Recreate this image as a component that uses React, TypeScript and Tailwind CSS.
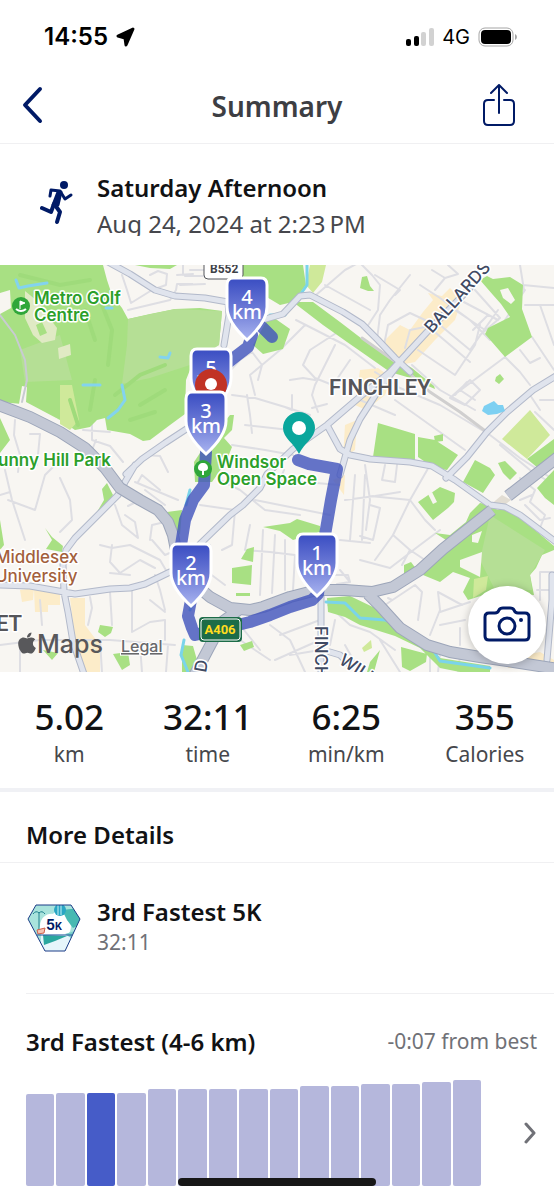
import { FaApple } from "react-icons/fa";

const stats = [
  { value: "5.02", label: "km" },
  { value: "32:11", label: "time" },
  { value: "6:25", label: "min/km" },
  { value: "355", label: "Calories" },
];

const bars = [92, 93, 93, 93, 97, 97, 97, 97, 97, 100, 100, 102, 102, 104, 106];
const currentBar = 2;

const mapGreens = [
  "M0 265H103L107 280L112 295L122 308L128 319L150 314L175 309L200 308L222 311L219 345L197 352L186 380L185 414L170 425L150 440L143 441L130 434L107 430L105 418L97 420L90 427L75 430L60 420L28 408L22 404L0 402Z",
  "M135 265H177L170 269L150 268Z",
  "M217 265H303L306 285L293 302L280 305L265 296L247 284L232 279Z",
  "M293 302L313 302L340 322L370 345L393 357L412 368L434 386L435 389L407 377L390 372L360 351L347 342L323 325Z",
  "M270 315L290 329L283 349L263 354L253 345Z",
  "M230 415H234L232 430L224 438L232 447L226 462L212 482L195 482L194 462L204 447Z",
  "M362 277L367 276L370 286L374 291L368 291L360 288Z",
  "M480 280L487 276L493 279L510 277L523 285L522 309L532 337L505 357L485 334L488 328L510 317L501 304L493 295Z",
  "M378 423L395 428L415 434L415 460L373 457Z",
  "M418 437L435 440L458 455L447 470L434 468L418 457Z",
  "M434 436L443 434V441L435 442Z",
  "M496 377L500 374L504 379L499 384L495 381Z",
  "M527 459L554 439V455L538 468Z",
  "M475 460L490 468L495 475L483 493L463 482Z",
  "M498 463L505 461L517 473L510 480L503 473Z",
  "M537 488L554 470V505L545 498Z",
  "M418 502L440 487L455 493L454 502L448 508L433 520Z",
  "M480 503L507 508L535 530L554 546V550L542 555L536 568L530 575L534 595L493 592L468 600L463 592L470 578L453 572L440 582L423 575L443 553L446 540L435 533L450 535L466 522L470 513Z",
  "M404 565L411 562L417 570L413 580L404 573Z",
  "M327 598L350 596L375 608L403 632L430 645L440 658L490 666V672H460L440 668L432 660L420 648L395 636L360 625L345 617L328 612Z",
  "M401 647L427 654L426 662L410 671L402 667Z",
  "M380 650L374 672H367L370 662Z",
  "M263 527L290 523L297 519L320 526V532L293 540L280 531Z",
  "M247 549L254 547L253 562L241 559Z",
  "M232 568L252 565L251 585L232 583Z",
  "M236 593H250V596H236Z",
  "M240 645L252 641L254 647L244 651Z",
  "M107 483L113 495L106 506L97 512L104 500L102 489Z",
  "M45 528L52 537L63 546L62 552L46 549L52 540Z",
  "M0 520L4 545L0 550Z",
  "M0 418L10 440L0 453Z",
  "M167 512L182 510L180 535L174 525Z",
  "M100 625L113 627L111 633L105 637L98 632Z",
  "M113 654L128 652L130 665L122 670Z",
  "M182 645L193 646L197 660L190 672H182Z",
  "M43 650L58 653L52 660Z",
];

const mapPaleGreens = [
  "M60 385H72L79 420L70 430L60 424Z",
  "M310 265H326L322 282L313 293L306 285Z",
  "M530 410L550 435L527 459L502 439Z",
  "M474 579L488 576L486 590L473 598Z",
  "M362 648L371 640L372 648L364 652Z",
];

const mapUrban = [
  "M385 340L400 325L410 330L423 312L433 300L428 293L442 296L450 288L462 300L455 320L435 340L415 362L400 365L385 352Z",
  "M360 370L378 368L392 378L385 395L366 410L355 405Z",
  "M345 425L357 420L355 450L343 458Z",
  "M333 480L345 475L344 495Z",
  "M20 590L34 588L33 600L22 602Z",
  "M34 590H60V605H48V612H35Z",
  "M70 598H85V625L100 645V672H85L75 640Z",
  "M508 658L540 652L554 660V668H508Z",
];

const minorRoads = [
  "M122 275L127 290L131 303L152 290L166 285L167 274L158 271L150 275",
  "M128 310L170 300L176 290L177 284H192",
  "M177 275L193 274M183 265V275",
  "M15 420L14 435L20 455L18 472M22 404L25 390L27 385",
  "M30 434L40 434L37 465M83 430L110 432M92 424L92 440L110 446L123 462M96 440L90 455M145 455L160 456L168 472",
  "M5 470L12 500L25 540M8 500L35 510L45 475L55 465M0 495L10 492",
  "M60 478L70 500L72 520L60 532",
  "M125 515L135 522L138 538L122 525L115 505M128 506L140 500M145 490L165 505M135 482L178 500M138 482L142 475L160 490",
  "M112 545L110 562L120 573L140 560L155 568M100 545L112 548L130 545L160 560L167 572M110 573L130 575",
  "M150 540L152 525L165 522M152 540L165 555L172 552",
  "M40 600L42 625M90 597L92 608L88 625M110 592L112 625M132 590V632L150 622L165 620L165 640M150 600L165 612",
  "M0 645L40 640L110 640L175 645M20 645V672M100 640L102 672M140 645L142 672M168 645L166 672M155 575L160 590L165 610",
  "M180 285L205 284M185 276H225",
  "M190 270H215M226 375L240 360L252 352L262 365L258 380M262 365L280 350L300 330L305 325",
  "M316 295L345 270L360 262M325 285L370 310",
  "M296 320L345 345L375 368M344 328L310 350L303 365L315 378L345 390M335 345L315 385L312 395L318 412M350 360L335 382",
  "M232 395L255 398L285 407L310 415M247 395L250 415L252 433M245 425L290 430M292 395V410L285 407M290 380L303 378L315 380",
  "M255 395L250 375L262 365M312 408L327 404",
  "M232 445L265 450L293 455M220 480L240 490L265 510L300 515M255 500L330 515M284 470L280 480L340 485",
  "M200 505L235 510L232 545L222 550M250 525L245 550L270 552L295 555",
  "M263 530L260 595M275 535L272 593M285 540L285 590M295 555L293 590M210 545L205 570L225 585",
  "M340 540L370 543M340 570L350 582M335 575L348 575L350 582L337 584",
  "M355 475L350 540M365 475L362 540M345 500L375 496L400 492",
  "M365 465L370 500L366 530M385 465L382 480L395 482L397 465M370 496L410 500L430 465M410 500L393 535L375 560M370 505L380 508L373 540L360 536",
  "M410 500L425 520L435 530M393 535L410 550L402 565M360 560L390 568L420 545L440 530",
  "M410 550L425 560M388 598L392 600M385 605L400 595L415 585L422 592L418 620",
  "M438 592L440 610L430 635M438 592L462 605M440 612L470 602M440 625L465 620M460 628L460 645",
  "M360 263L372 275L380 285L378 310L365 330M375 275L400 290L395 295M410 275L390 300L380 315L377 340L382 345",
  "M384 345L388 325L410 313L425 320M405 348L410 330L430 326",
  "M420 285L440 298L470 320L490 340M432 270L445 278L458 274L448 265M445 278L435 290M460 300L498 320M475 290L500 318L480 335",
  "M455 310L485 330M488 315L473 330",
  "M440 325L470 350L498 310M436 333L470 362M418 350L455 375",
  "M480 325L475 345L455 375M505 357L450 398M505 320L525 290",
  "M523 285L554 288M525 305H554M540 305L554 345M520 265L524 290M532 337L554 370M505 357L520 372L530 385M520 350L530 363L540 358",
  "M412 365L440 390L475 410M450 398L470 380L480 390L465 405L450 398M460 390L475 400M467 382L455 395",
  "M375 372L400 388L440 405L490 435L520 458L554 480M395 400L430 425L465 450",
  "M360 400L395 415M530 395L540 410M540 400H554M535 412L554 430M500 445L530 470L554 485",
  "M520 478L535 490L530 502L545 515L540 528M520 500L532 495M525 505L540 520L550 518M540 572H554M537 590H554M540 572V600",
  "M225 635L240 640L270 660M240 625L260 650M270 625L290 640L305 672M280 635L320 620M290 655L320 650M275 660L320 640",
  "M328 605L350 625L370 632L395 650M335 620L330 645M345 645L360 672M380 640L400 672",
  "M430 655V672M440 655L438 672M460 655L458 672",
];

const mediumRoads = [
  "M0 585L30 586L64 592L75 594L110 589L130 588L145 584L170 572",
  "M135 465L125 482L118 495L100 513L75 538L66 550L63 565L64 592L68 612L73 642L84 674",
  "M126 474L142 459L165 443L188 428",
  "M108 262L130 274L155 290L175 296L205 298L228 302L229 315L224 345",
  "M255 322L283 314L300 296L310 295L343 312L362 324L378 340L395 358L410 372",
  "M470 288L427 332L390 372L362 395L327 425L293 449L267 474L260 488L243 505L230 515L200 544",
  "M400 362L380 388L360 419L350 440L340 475",
  "M327 425L340 449L350 455L370 459L410 462L432 466L455 480L490 505L505 507L520 515L556 542",
  "M446 478L467 457L487 432L507 412L533 390L556 376",
  "M321 592V672",
  "M552 575V600L547 660",
  "M330 652L340 655L350 665",
];

const majorRoads = [
  "M-4 404L30 417L60 432L85 448L105 468L120 488L140 500L158 510L168 522L173 535L178 560L190 580L210 597L230 608L250 610L263 607L290 597L317 590L345 590L372 592L393 587L420 570L443 549L492 510",
  "M508 496L558 457",
  "M368 594L380 606L400 628L427 645L450 652L480 657L520 663L558 669",
  "M240 609L222 622L212 642L194 676",
];

const route = [
  "M298 460L309 464L337 469L331 500L325 535L318 594L312 600L290 607L270 615L250 622L225 628L195 635L192 628L188 616L191 600",
  "M191 575L181 545L185 520L193 500L204 485L206 452",
  "M206 380L235 357L248 347L252 335",
  "M262 327L272 337",
];

function KmMarker({ x, y, value }: { x: number; y: number; value: string }) {
  return (
    <g transform={`translate(${x} ${y})`}>
      <path
        d="M-14 1H14Q20 1 20 8V30C20 42 11 53 0 63C-11 53 -20 42 -20 30V8Q-20 1 -14 1Z"
        fill="url(#markerFill)"
        stroke="#fff"
        strokeWidth="3"
      />
      <text textAnchor="middle" fill="#fff" className="text-[20px] font-medium">
        <tspan x="0" y="27">{value}</tspan>
        <tspan x="0" y="42">km</tspan>
      </text>
    </g>
  );
}

function RouteMap() {
  return (
    <svg viewBox="0 265 554 407" className="block h-auto w-full" role="img" aria-label="Route map">
      <defs>
        <linearGradient id="markerFill" x1="0" y1="0" x2="0" y2="1">
          <stop offset="0.05" stopColor="#3e51c4" />
          <stop offset="0.5" stopColor="#6c7ad6" />
          <stop offset="1" stopColor="#a9b4f0" />
        </linearGradient>
      </defs>

      <rect x="0" y="265" width="554" height="407" fill="#f8f6f2" />
      <path d={mapUrban.join("")} fill="#fcecc9" />
      <path d={minorRoads.join("")} fill="none" stroke="#dedee3" strokeWidth="2" strokeLinejoin="round" strokeLinecap="round" />
      <path d={mapGreens.join("")} fill="#a8e083" />
      <path d="M128 319L175 309L222 311L219 345L190 365L150 378L122 384L127 345ZM20 350L60 335L72 380L25 382ZM490 515L545 550L530 575L532 590L495 590L480 560Z" fill="#b5df95" />
      <path d={mapPaleGreens.join("")} fill="#cfe99a" />
      <path d="M100 300L112 330L108 365M85 310L95 340M70 400L78 425M115 395L140 375L165 365M140 405L165 390M130 420L155 412M95 380L90 410M20 275L60 285L90 280" fill="none" stroke="#9fdb7b" strokeWidth="4" strokeLinecap="round" />
      <path d="M25 291L36 300L57 328L55 340L42 343L33 335L25 318ZM58 348L70 344L71 355L59 359Z" fill="#e0eac4" />
      <path d="M0 293L10 290L11 308L0 314ZM22 386L27 387L26 402L60 420L18 410ZM500 290L508 288L515 300L511 304L503 298ZM472 535L482 531L478 543L472 542ZM460 560L482 552L480 577L472 573L460 567ZM428 494L432 492L437 502L433 504Z" fill="#f7f5f0" />
      <path d="M36 325L42 322L47 333L40 336Z" fill="#a8e083" />
      <path d="M489 506L502 495L511 500L498 510Z" fill="#e2ddd3" />

      <g fill="none" strokeLinejoin="round" strokeLinecap="round">
        <path d="M16 280L19 288L28 286L47 283M83 385H100M122 385L125 400L118 410L108 418M160 357L168 358L170 353M106 308H112" stroke="#83d3ee" strokeWidth="3" />
        <path d="M307 265V285L300 295L290 305L285 315L270 315M190 490L186 505M184 640L181 655L188 672M193 600L190 610M326 602L345 603L360 618L385 620L415 634L430 645L440 661L490 668" stroke="#7ad4ea" strokeWidth="3" />
        <path d="M0 315L15 335L25 360L27 380L22 402" stroke="#c8cbd2" strokeWidth="2" />
        <path d="M362 338L400 365L430 392L460 412L488 433" stroke="#d0cfcf" strokeWidth="3" />
        <path d={mediumRoads.join("")} stroke="#b2b9ca" strokeWidth="7" />
        <path d={mediumRoads.join("")} stroke="#e0e4ed" strokeWidth="5" />
        <g strokeLinecap="butt">
          <path d={majorRoads.join("")} stroke="#9ca5b9" strokeWidth="12" />
          <path d={majorRoads.join("")} stroke="#c3c8d5" strokeWidth="10" />
        </g>
        <path d={route.join("")} stroke="#4356bd" strokeOpacity="0.82" strokeWidth="12" />
      </g>
      <path d="M488 404L494 401L498 405L503 405L505 411L497 414L488 415L482 411L484 406Z" fill="#7dd0f2" />

      <g stroke="#fff" strokeWidth="3" strokeLinejoin="round" paintOrder="stroke" className="font-[Inter,sans-serif]">
        <g fill="#2c9f2a" className="text-[17px] font-semibold">
          <text x="34" y="304">Metro Golf</text>
          <text x="34" y="321">Centre</text>
          <text x="-13" y="466">Sunny Hill Park</text>
          <text x="217" y="468">Windsor</text>
          <text x="217" y="485">Open Space</text>
        </g>
        <g fill="#a35f3c" className="text-[17px] font-medium">
          <text x="-5" y="563">Middlesex</text>
          <text x="-5" y="582">University</text>
        </g>
        <g fill="#3f4a63" className="text-[17px] font-medium">
          <text transform="translate(432 334) rotate(-48)">BALLARDS</text>
          <text transform="translate(315 626) rotate(90)">FINCHLEY</text>
          <text transform="translate(338 663) rotate(33)">WILLOW</text>
          <text transform="translate(206 673) rotate(-80)">D</text>
        </g>
        <g fill="#55555a" className="font-[Roboto,sans-serif] text-[22px] font-semibold">
          <text x="329" y="395">FINCHLEY</text>
          <text x="-4" y="631">ET</text>
        </g>
      </g>

      <circle cx="21" cy="306" r="9" fill="#2fa63a" />
      <path d="M20 309V301L25 303L20 305" fill="#fff" stroke="#fff" strokeWidth="1" />
      <path d="M16 309Q21 313 26 309" fill="none" stroke="#fff" strokeWidth="2" />
      <circle cx="203" cy="469" r="9" fill="#2fa63a" />
      <path d="M203 463C206 463 208 465 208 468C208 470 206 471 204 471V475H202V471C200 471 198 470 198 468C198 465 200 463 203 463Z" fill="#fff" />

      <rect x="204" y="255" width="39" height="24" rx="4" fill="#fff" stroke="#54575c" strokeWidth="1" />
      <text x="210" y="273" fill="#3e4147" className="font-[Roboto,sans-serif] text-[12px] font-bold">B552</text>
      <rect x="199" y="617" width="43" height="25" rx="4" fill="#1c6c48" />
      <rect x="201" y="619" width="39" height="21" rx="3" fill="#1c6c48" stroke="#fff" strokeWidth="1" />
      <text x="220" y="634" textAnchor="middle" fill="#ffdb1f" className="font-[Roboto,sans-serif] text-[13px] font-bold">A406</text>

      <KmMarker x={247} y={277} value="4" />
      <KmMarker x={211} y={348} value="5" />
      <circle cx="211" cy="385" r="16" fill="#c13325" />
      <circle cx="211" cy="384" r="6" fill="#fff" />
      <KmMarker x={206} y={391} value="3" />
      <path d="M299 454C294 443 283 438 283 428A16 16 0 0 1 315 428C315 438 304 443 299 454Z" fill="#0aa69c" />
      <circle cx="299" cy="428" r="7" fill="#fff" />
      <KmMarker x={317} y={533} value="1" />
      <KmMarker x={191} y={543} value="2" />

      <FaApple x="15" y="631" size={24} color="#58585b" />
      <text x="37" y="653" fill="#58585b" className="font-[Inter,sans-serif] text-[25px] font-medium">Maps</text>
      <a href="#legal">
        <text x="121" y="652" fill="#68686b" stroke="#fff" strokeWidth="2" paintOrder="stroke" className="font-[Inter,sans-serif] text-[16px] font-medium underline">Legal</text>
      </a>
    </svg>
  );
}

function StatusBar() {
  return (
    <div className="flex h-[74px] items-center justify-between pl-11 pr-9 font-[Inter,sans-serif] text-black">
      <div className="flex items-center gap-2">
        <span className="text-[24px] font-semibold">14:55</span>
        <svg width="20" height="20" viewBox="0 0 20 20" aria-hidden="true">
          <path d="M17 2L2 9L9 11L10 18Z" fill="#000" stroke="#000" strokeWidth="3" strokeLinejoin="round" />
        </svg>
      </div>
      <div className="flex items-center gap-2">
        <svg width="28" height="18" viewBox="0 0 28 18" aria-hidden="true">
          <rect x="0" y="11" width="5" height="7" rx="2" />
          <rect x="8" y="8" width="5" height="10" rx="2" />
          <rect x="15" y="4" width="5" height="14" rx="2" fill="#d2d2d2" />
          <rect x="23" y="0" width="5" height="18" rx="2" fill="#d2d2d2" />
        </svg>
        <span className="text-[20px]">4G</span>
        <svg width="40" height="20" viewBox="0 0 40 20" aria-hidden="true">
          <rect x="1" y="1" width="34" height="18" rx="6" fill="#fff" stroke="#a5a5a5" strokeWidth="1" />
          <rect x="3" y="3" width="30" height="14" rx="4" />
          <path d="M37 7Q39 8 39 10Q39 12 37 13Z" fill="#a5a5a5" />
        </svg>
      </div>
    </div>
  );
}

function RunnerIcon() {
  return (
    <svg width="33" height="44" viewBox="0 0 33 44" fill="none" stroke="#001a66" strokeLinecap="round" strokeLinejoin="round" className="shrink-0" aria-hidden="true">
      <circle cx="24" cy="4" r="4" fill="#001a66" stroke="none" />
      <path d="M10 15L11 9L20 10L25 18L31 14" strokeWidth="3" />
      <path d="M18 11H21L18 24H13Z" fill="#001a66" strokeWidth="3" />
      <path d="M14 23L11 31L2 27" strokeWidth="4" />
      <path d="M15 24L20 31L17 41" strokeWidth="4" />
    </svg>
  );
}

function AwardBadge() {
  return (
    <svg width="54" height="48" viewBox="0 0 54 48" className="shrink-0" aria-hidden="true">
      <defs>
        <clipPath id="badgeClip">
          <path d="M9 1H44L53 15L38 47H18L1 15Z" />
        </clipPath>
      </defs>
      <g clipPath="url(#badgeClip)">
        <rect width="54" height="48" fill="#a9e3dc" />
        <path d="M13 22C13 14 20 9 26 10C31 4 40 10 41 17C46 19 44 30 40 30H16C12 30 11 25 13 22Z" fill="#fff" />
        <path d="M35 6L54 4V20L46 24L40 16Z" fill="#47b9b2" />
        <path d="M14 30H54V48H14Z" fill="#e6f6fb" />
        <path d="M16 31L40 32L28 37L17 41Z" fill="#2aa79f" />
        <path d="M38 30L48 27L44 34Z" fill="#77cfc9" />
        <circle cx="33" cy="6" r="6" fill="#2aa6c4" />
        <path d="M31 1V11M34 1V11" stroke="#c8f1f5" />
        <path d="M12 8V30M6 10Q9 6 12 9Q15 6 18 10" fill="none" stroke="#20808e" />
        <path d="M10 26L18 24L17 29L11 30Z" fill="#f3c5b5" stroke="#d1604a" strokeWidth="1" />
        <path d="M10 31H45" stroke="#24549a" />
      </g>
      <path d="M9 1H44L53 15L38 47H18L1 15Z" fill="none" stroke="#1c3d87" />
      <text x="19" y="26" fill="#001a66" className="font-[Inter,sans-serif] text-[14px] font-bold">
        5<tspan className="text-[10px]">K</tspan>
      </text>
    </svg>
  );
}

export default function App() {
  return (
    <div className="relative bg-white pb-3.5 font-['Noto_Sans',sans-serif] text-[#111214]">
      <StatusBar />

      <header className="grid h-[70px] grid-cols-[1fr_auto_1fr] items-center border-b border-[#f0f0f2] pb-1.5 pl-5 pr-[38px] text-[#001a66]">
        <button type="button" aria-label="Back" className="justify-self-start">
          <svg width="25" height="40" viewBox="0 0 25 40" fill="none" stroke="currentColor" strokeWidth="4" strokeLinecap="round" strokeLinejoin="round">
            <path d="M20 3L5 19L20 35" />
          </svg>
        </button>
        <h1 className="pl-[18px] text-[28px] font-semibold leading-9 text-[#3d3e43]">Summary</h1>
        <button type="button" aria-label="Share" className="justify-self-end">
          <svg width="34" height="44" viewBox="0 0 34 44" fill="none" stroke="currentColor" strokeWidth="2" strokeLinecap="round" strokeLinejoin="round">
            <path d="M12 16H6Q2 16 2 20V37Q2 41 6 41H28Q32 41 32 37V20Q32 16 28 16H22M17 29V1M9 9L17 1L25 9" />
          </svg>
        </button>
      </header>

      <section className="flex h-[121px] items-center gap-6 pb-[3px] pl-10">
        <RunnerIcon />
        <div>
          <h2 className="text-[24px] font-semibold leading-9">Saturday Afternoon</h2>
          <p className="h-[30px] overflow-hidden text-[24px] leading-9 text-[#46474c]">Aug 24, 2024 at 2:23&#8201;PM</p>
        </div>
      </section>

      <div className="relative">
        <RouteMap />
        <button
          type="button"
          aria-label="Add photo"
          className="absolute bottom-2 right-2 flex size-[78px] items-center justify-center rounded-full bg-white text-[#001a66] shadow-[0_1px_8px_rgba(0,0,0,0.25)]"
        >
          <svg width="48" height="38" viewBox="0 0 48 38" fill="none" stroke="currentColor" strokeWidth="3" strokeLinecap="round" strokeLinejoin="round">
            <path d="M6 7H12Q15 7 16 4Q17 2 20 2H27Q30 2 31 4Q32 7 35 7H42Q46 7 46 11V30Q46 34 42 34H6Q2 34 2 30V11Q2 7 6 7Z" />
            <circle cx="24" cy="20" r="8" />
            <circle cx="38" cy="14" r="2" fill="currentColor" stroke="none" />
          </svg>
        </button>
      </div>

      <dl className="grid h-[120px] grid-cols-4 border-b-4 border-[#f0f1f5] pt-[22px] text-center">
        {stats.map((stat) => (
          <div key={stat.label} className="flex flex-col-reverse justify-end">
            <dt className="text-[21px] leading-7 text-[#46474c]">{stat.label}</dt>
            <dd className="text-[35px] font-medium leading-[46px]">{stat.value}</dd>
          </div>
        ))}
      </dl>

      <section>
        <h2 className="flex h-[71px] items-center border-b border-[#f0f0f2] px-[26px] pt-4 text-[24px] font-semibold">More Details</h2>

        <div className="flex h-[130px] items-center gap-4 pl-[27px]">
          <AwardBadge />
          <div className="pb-1">
            <h3 className="text-[24px] font-semibold leading-8">3rd Fastest 5K</h3>
            <p className="text-[21px] leading-7 text-[#707177]">32:11</p>
          </div>
        </div>

        <div className="ml-[26px] border-t border-[#f0f0f2] pr-[17px] pt-8">
          <div className="flex h-8 items-center justify-between">
            <h3 className="text-[24px] font-semibold">3rd Fastest (4-6 km)</h3>
            <p className="text-[21px] text-[#707177]">-0:07 from best</p>
          </div>
          <div className="mt-[22px] flex items-center justify-between gap-[43px]">
            <div className="flex h-[106px] flex-1 items-end gap-0.5">
              {bars.map((height, index) => (
                <div
                  key={index}
                  className={`flex-1 rounded-[2px] ${index === currentBar ? "bg-[#465cc8]" : "bg-[#b5b7dc]"}`}
                  style={{ height }}
                />
              ))}
            </div>
            <button type="button" aria-label="See all results" className="text-[#707177]">
              <svg width="13" height="24" viewBox="0 0 13 24" fill="none" stroke="currentColor" strokeWidth="3" strokeLinecap="round" strokeLinejoin="round">
                <path d="M2 3L10 12L2 21" />
              </svg>
            </button>
          </div>
        </div>
      </section>

      <div className="absolute inset-x-0 bottom-3.5 mx-auto h-2 w-[198px] rounded-full bg-[#171717]" />
    </div>
  );
}
